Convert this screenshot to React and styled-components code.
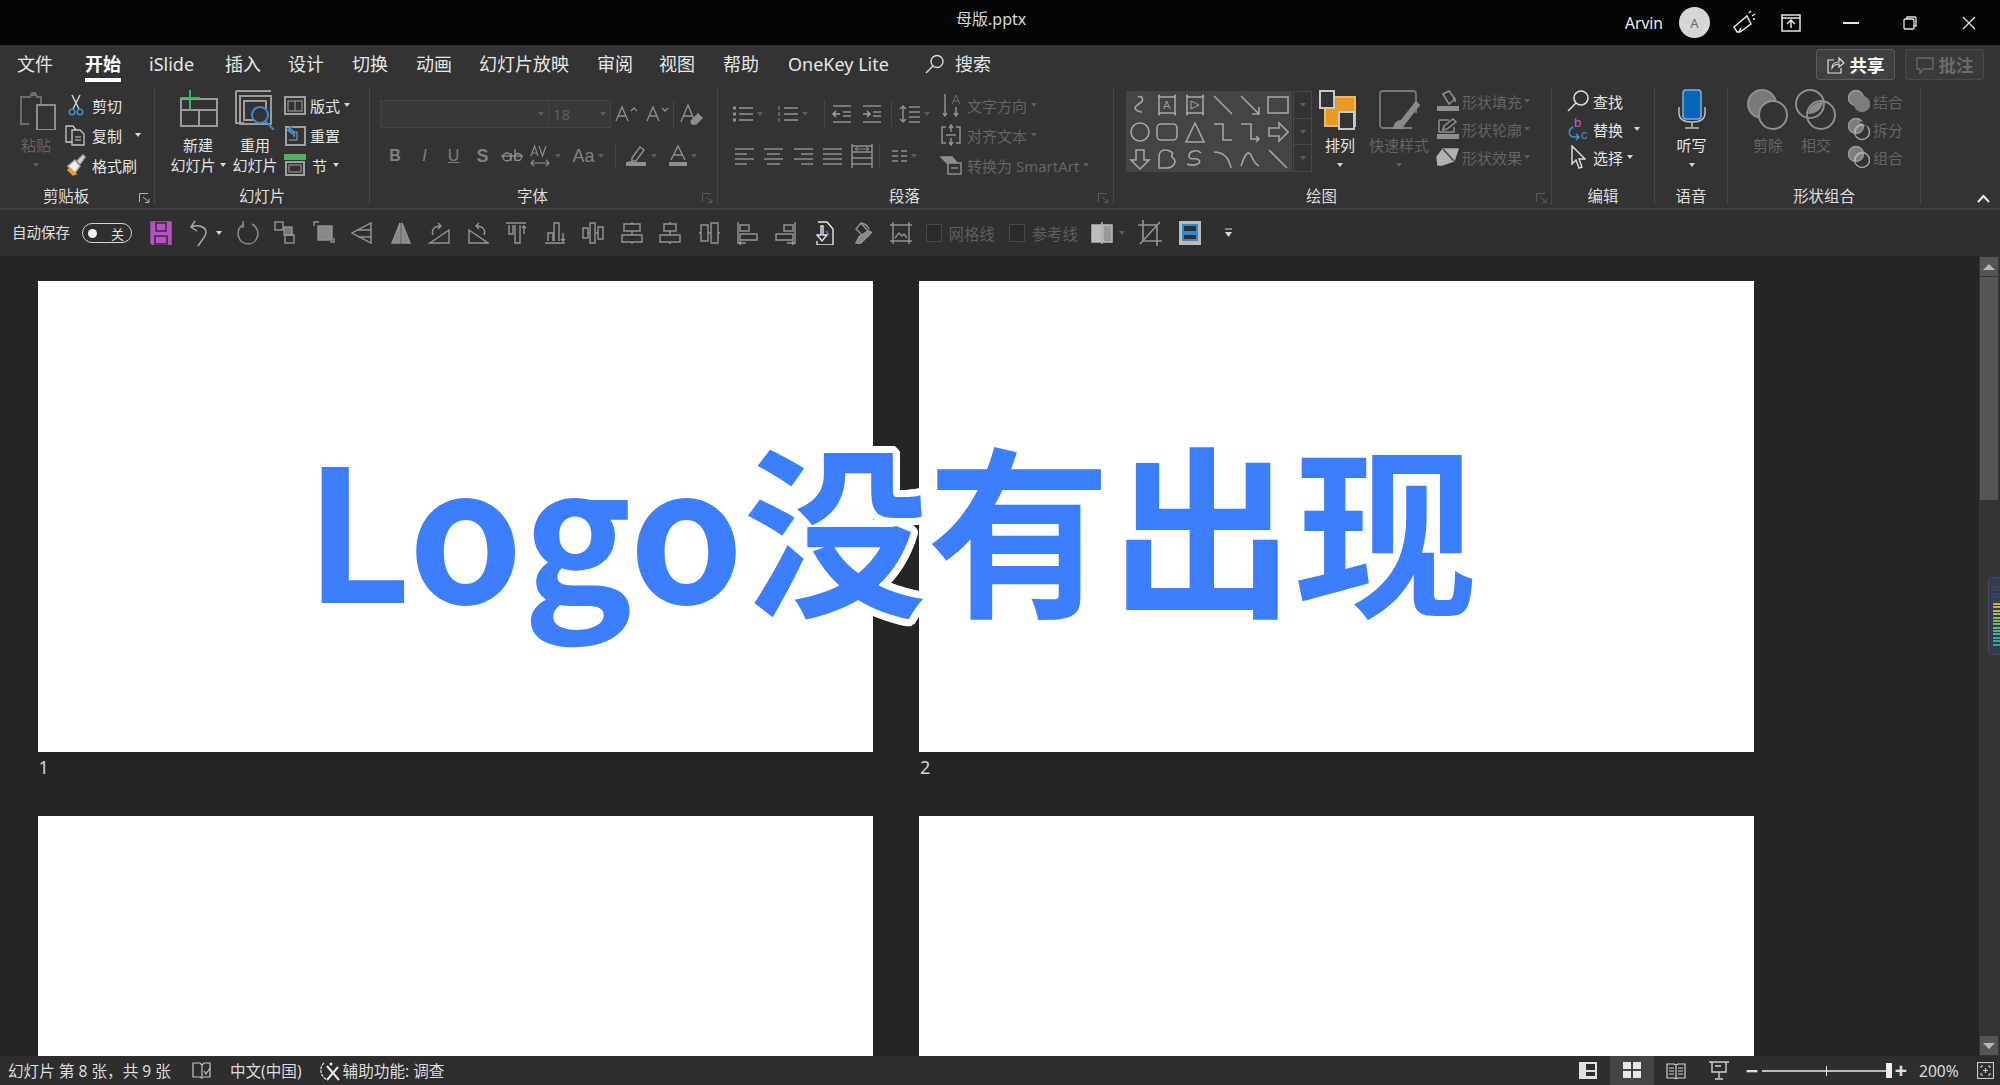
import React from "react";
import styled, { createGlobalStyle } from "styled-components";

const Global = createGlobalStyle`
  html, body { margin: 0; padding: 0; background: #252525; }
  body { font-family: "Noto Sans", "Noto Sans CJK SC", sans-serif; overflow: hidden; }
  * { box-sizing: border-box; }
`;
const CJK = `"Noto Sans", "Noto Sans CJK SC", sans-serif`;
const ring = Array.from({ length: 36 }, (_, i) => {
  const a = (i / 36) * Math.PI * 2;
  return `${(Math.cos(a) * 7).toFixed(1)}px ${(Math.sin(a) * 7).toFixed(1)}px 0 #fff`;
}).join(", ");

const Window = styled.div`position: relative; width: 2000px; height: 1085px; display: flex; flex-direction: column; overflow: hidden; color: #e4e4e4; font-family: ${CJK};`;

/* title bar */
const TitleBar = styled.div`height: 45px; background: #050505; display: flex; align-items: center; position: relative; flex: none;`;
const FileName = styled.div`position: absolute; left: 956px; top: 8px; font-size: 16px; line-height: 22px; color: #d8d8d8;`;
const TitleRight = styled.div`margin-left: 1625px; display: flex; align-items: center;`;
const UserName = styled.span`font-size: 15.6px; color: #ececec; width: 54px;`;
const Avatar = styled.div`width: 31px; height: 31px; border-radius: 50%; background: #d6d6d6; color: #667; font-size: 13px; display: flex; align-items: center; justify-content: center;`;
const WinBtn = styled.div`width: ${p => p.$w}px; display: flex; justify-content: center;`;

/* tabs */
const TabBar = styled.div`height: 43px; background: #333; display: flex; align-items: flex-start; padding-left: 17px; position: relative; flex: none;`;
const Tab = styled.div`width: ${p => p.$w}px; font-size: 18px; line-height: 38px; height: 38px; color: ${p => p.$active ? "#fff" : "#e6e6e6"}; font-weight: ${p => p.$active ? 700 : 400}; position: relative; white-space: nowrap;
  ${p => p.$active && `&::after { content: ""; position: absolute; left: 0; width: 36px; top: 33px; height: 4px; background: #fff; }`}`;
const SearchBox = styled.div`display: flex; align-items: center; gap: 11px; font-size: 18px; line-height: 38px; color: #e6e6e6;`;
const TabActions = styled.div`position: absolute; right: 16px; top: 4px; display: flex; gap: 10px;`;
const TabBtn = styled.div`width: 79px; height: 31px; border-radius: 3px; border: 1px solid ${p => p.$dim ? "#484848" : "#5c5c5c"}; background: ${p => p.$dim ? "#3a3a3a" : "#404040"}; color: ${p => p.$dim ? "#6b6b6b" : "#fff"}; font-weight: 700; font-size: 17.5px; line-height: 26px; display: flex; align-items: center; justify-content: center; gap: 5px;`;

/* ribbon */
const Ribbon = styled.div`height: 122px; background: #333; display: flex; border-bottom: 2px solid #3f3f3f; position: relative; flex: none; padding-bottom: 4px;`;
const Group = styled.section`width: ${p => p.$w}px; display: flex; flex-direction: column; border-right: 1px solid #474747; flex: none; height: 117px;`;
const Body = styled.div`height: 99px; margin-top: -1px; display: flex; padding-left: ${p => p.$pl || 0}px; gap: ${p => p.$gap || 0}px;`;
const GroupLabel = styled.div`height: 19px; line-height: 22px; text-align: center; font-size: 15.4px; color: #dedede; position: relative; padding-right: ${p => p.$shift || 0}px;`;
const Launcher = styled.span`position: absolute; right: 4px; top: 7px;`;
const Big = styled.div`width: ${p => p.$w}px; display: flex; flex-direction: column; align-items: center; flex: none;`;
const BigIcon = styled.div`height: 46px; display: flex; align-items: center; justify-content: center;`;
const BigText = styled.div`font-size: 15px; line-height: 20px; height: 20px; margin-top: ${p => p.$second ? 0 : 2}px; white-space: nowrap; color: ${p => p.$dim ? "#646464" : "#e4e4e4"}; display: flex; align-items: center; gap: 4px;`;
const Col = styled.div`display: flex; flex-direction: column; flex: none; width: ${p => p.$w ? p.$w + "px" : "auto"}; margin-left: ${p => p.$ml || 0}px; padding-top: ${p => p.$pt ?? 3}px;`;
const Row = styled.div`height: ${p => p.$h || 30}px; display: flex; align-items: center; gap: ${p => p.$gap ?? 4}px; font-size: 15px; white-space: nowrap; color: ${p => p.$dim ? "#646464" : "#e6e6e6"};`;
const IconSlot = styled.span`width: ${p => p.$w || 22}px; display: flex; justify-content: center; flex: none;`;
const Caret = styled.i`display: inline-block; width: 0; height: 0; border-left: 3.5px solid transparent; border-right: 3.5px solid transparent; border-top: 4px solid ${p => p.$dim ? "#5c5c5c" : "#d8d8d8"}; margin-left: ${p => p.$ml || 0}px; flex: none;`;
const CaretRow = styled.div`height: 20px; display: flex; align-items: center; justify-content: center;`;

const FontFields = styled.div`width: 231px; height: 28px; margin-left: 10px; border: 1px solid #444; display: flex; background: #383838;`;
const FontName = styled.div`width: 168px; border-right: 1px solid #444; display: flex; align-items: center; justify-content: flex-end; padding-right: 4px;`;
const FontSize = styled.div`flex: 1; font-size: 15px; color: #5e5e5e; display: flex; align-items: center; justify-content: space-between; padding: 0 4px 0 4px;`;
const ToolRow = styled.div`display: flex; align-items: center; height: ${p => p.$h}px; padding-left: ${p => p.$pl || 0}px; color: #8a8a8a;`;
const ToolCell = styled.div`width: ${p => p.$w}px; display: flex; align-items: center; justify-content: ${p => p.$start ? "flex-start" : "center"}; padding-left: ${p => p.$pl || 0}px; gap: 3px; flex: none;`;
const FontGlyph = styled.span`font-size: ${p => p.$s || 16}px; color: #808080; font-weight: ${p => p.$b ? 700 : 400}; font-style: ${p => p.$i ? "italic" : "normal"}; text-decoration: ${p => p.$u ? "underline" : "none"}; font-family: "Liberation Sans", sans-serif;`;
const VSep = styled.div`width: 1px; height: ${p => p.$h || 26}px; background: #474747; flex: none; margin: 0 ${p => p.$m || 0}px;`;

const Gallery = styled.div`width: 186px; height: 81px; margin: 4px 0 0 12px; display: flex; flex: none;`;
const GalleryGrid = styled.div`width: 166px; background: #444; display: grid; grid-template-columns: repeat(6, 1fr); grid-auto-rows: 27px; place-items: center;`;
const GalleryScroll = styled.div`width: 19px; margin-left: 1px; border: 1px solid #484848; display: flex; flex-direction: column;`;
const GalleryBtn = styled.div`flex: 1; display: flex; align-items: center; justify-content: center; border-bottom: ${p => p.$last ? 0 : "1px solid #484848"};`;

/* quick access */
const Quick = styled.div`height: 46px; background: #2f2f2f; display: flex; align-items: center; padding-left: 12px; flex: none;`;
const AutoSave = styled.span`font-size: 14.5px; line-height: 18px; margin-top: -3px; color: #e0e0e0; width: 70px; white-space: nowrap;`;
const Toggle = styled.div`width: 50px; height: 20px; border-radius: 10px; border: 1.5px solid #d4d4d4; display: flex; align-items: center; justify-content: space-between; padding: 0 7px 0 5px; font-size: 13px; color: #e6e6e6; margin-right: 10px;`;
const Knob = styled.i`width: 9px; height: 9px; border-radius: 50%; background: #f0f0f0;`;
const Slot = styled.div`width: ${p => p.$w || 38.5}px; display: flex; justify-content: center; align-items: center; gap: 3px; flex: none;`;
const CheckItem = styled.div`display: flex; align-items: center; gap: 7px; font-size: 15.4px; color: #5e5e5e; margin-left: ${p => p.$ml}px;`;
const CheckBox = styled.i`width: 16px; height: 18px; border: 1px solid #484848; background: #2a2a2a;`;

/* workspace */
const Workspace = styled.div`flex: 1; min-height: 0; background: #252525; display: flex; position: relative;`;
const Slides = styled.div`flex: 1; padding: 25px 0 0 37.5px; display: grid; grid-template-columns: 835px 835px; grid-auto-rows: 535px; column-gap: 46.5px; overflow: hidden;`;
const Cell = styled.div`font-size: 18px; color: #d4d4d4; line-height: 30px;`;
const Sheet = styled.div`height: 471px; background: #fff;`;
const Num = styled.div`padding-left: 1px;`;
const Scrollbar = styled.div`width: 21px; background: #343434; display: flex; flex-direction: column; padding: 1px 2px 1px 1px; flex: none;`;
const ScrollBtn = styled.div`height: 19px; background: #555; display: flex; align-items: center; justify-content: center; flex: none;`;
const Thumb = styled.div`height: 223px; margin-top: 1px; background: #565656; flex: none;`;
const ScrollGap = styled.div`flex: 1;`;
const Arrow = styled.i`width: 0; height: 0; border-left: 6px solid transparent; border-right: 6px solid transparent; ${p => p.$down ? "border-top" : "border-bottom"}: 6px solid #b8b8b8;`;
const Meter = styled.div`position: absolute; right: -4px; top: 321px; width: 16px; height: 78px; border-radius: 4px; background: #33394f; border: 1px solid #434a60; display: flex; flex-direction: column; gap: 1.4px; padding: 8px 3px 6px 4px;`;
const Tick = styled.i`height: 2px; background: ${p => p.$c};`;
const Headline = styled.div`position: absolute; left: 305px; top: 393px; font-family: "Noto Sans CJK SC", sans-serif; font-weight: 700; font-size: 183.4px; line-height: 260px; color: #3d7eff; white-space: nowrap; text-shadow: ${ring};`;

/* status */
const Status = styled.div`height: 29px; background: #2e2e2e; display: flex; align-items: center; font-size: 15.6px; color: #dcdcdc; padding: 0 6px 0 8px; flex: none; white-space: nowrap;`;
const StatusItem = styled.span`margin-left: ${p => p.$ml || 0}px; display: flex; align-items: center; gap: ${p => p.$gap || 0}px;`;
const StatusRight = styled.div`margin-left: auto; display: flex; align-items: center;`;
const ViewBtn = styled.div`width: ${p => p.$w}px; height: 29px; display: flex; align-items: center; justify-content: center; background: ${p => p.$on ? "#444" : "transparent"}; margin-left: ${p => p.$ml || 0}px; flex: none;`;
const Zoom = styled.div`display: flex; align-items: center; margin-left: 5px;`;
const Sign = styled.span`font-size: 21px; line-height: 20px; font-weight: 700; color: #e0e0e0; width: ${p => p.$w}px; margin-left: ${p => p.$ml || 0}px; text-align: center; font-family: "Liberation Sans", sans-serif;`;
const Track = styled.div`width: 130px; margin-left: 3px; height: 2px; background: #bbb; position: relative;`;
const TrackTick = styled.i`position: absolute; left: 64px; top: -4px; width: 1px; height: 10px; background: #ddd;`;
const TrackHandle = styled.i`position: absolute; right: 0; top: -7px; width: 6px; height: 15px; background: #eee;`;
const Percent = styled.span`margin-left: 9px; width: 42px;`;
const Collapse = styled.span`position: absolute; left: 1977px; top: 106px;`;

const Svg = styled.svg`display: block; flex: none; fill: none; stroke: ${p => p.$c || "#979797"}; stroke-width: ${p => p.$sw || 1.5};`;
const Ic = ({ w = 22, h = 22, c, sw, children }) => <Svg width={w} height={h} viewBox={`0 0 ${w} ${h}`} $c={c} $sw={sw}>{children}</Svg>;
const G = "#8e8e8e", D = "#6c6c6c";

const PasteI = () => <Ic w={46} h={40} c={D} sw={2}><g transform="translate(6 0)"><path d="M8 7H2v27h8" /><path d="M8 7h3l2-4 3 0 2 4h4v9" /><path d="M12 5h6" /><rect x="18" y="15" width="18" height="25" fill="#333" stroke={G} /></g></Ic>;
const ScissorI = () => <Ic w={16} h={24}><path d="M4 2l7 14M12 2L5 16" stroke="#cfcfcf" /><circle cx="4" cy="19" r="2.8" stroke="#3d8fd6" /><circle cx="12" cy="19" r="2.8" stroke="#3d8fd6" /></Ic>;
const CopyI = () => <Ic w={22} h={22} c="#c8c8c8" sw={1.3}><path d="M7 18H1V2h7l3 4" /><path d="M7 6h8l4 4v11H7z" /><path d="M10 13h6M10 16h6" stroke="#999" /></Ic>;
const BrushI = () => <Ic w={22} h={22}><path d="M3 12l7-6 5 6-6 8z" fill="#f0f0f0" stroke="#aaa" /><path d="M5 14l6 6-3 1-5-5z" fill="#e4a02a" stroke="#e4a02a" /><path d="M12 7l6-6 2 2-5 7" fill="#d8d8d8" stroke="#aaa" /></Ic>;
const NewSlideI = () => <Ic w={42} h={40} c="#9c9c9c" sw={2}><rect x="4" y="9" width="36" height="27" /><path d="M4 20h36M22 20v16" /><path d="M3 8h20" stroke="#43b35c" /><path d="M13 0v20" stroke="#43b35c" /></Ic>;
const ReuseI = () => <Ic w={40} h={40} c="#9c9c9c" sw={2}><path d="M1 1h35M1 1v32h8" /><rect x="5" y="6" width="31" height="28" /><rect x="9" y="11" width="22" height="19" /><circle cx="25" cy="25" r="8" stroke="#3b8ad2" fill="#333" /><path d="M30 31l9 9" stroke="#3b8ad2" /></Ic>;
const LayoutI = () => <Ic w={22} h={19} c="#a0a0a0" sw={2}><rect x="1" y="1" width="20" height="17" /><rect x="4" y="5" width="14" height="10" strokeWidth="1" /><path d="M11 5v10" strokeWidth="1" /></Ic>;
const ResetI = () => <Ic w={22} h={22} c="#a0a0a0" sw={2}><rect x="2" y="3" width="19" height="18" /><path d="M5 8h8v8H5" strokeWidth="1" /><path d="M9 2L4 6l5 4" stroke="#3d8fd6" /><path d="M5 6c5 0 6 3 5 7" stroke="#3d8fd6" /></Ic>;
const SectionI = () => <Ic w={22} h={22} c="#a0a0a0" sw={2}><rect x="1" y="1" width="20" height="4" fill="#4fb25f" stroke="#4fb25f" /><rect x="2" y="8" width="18" height="13" /><rect x="5" y="11" width="12" height="7" strokeWidth="1" /></Ic>;
const LaunchI = ({ c = "#b0b0b0" }) => <Ic w={11} h={10} c={c} sw={1}><path d="M.5 9V.5H9" /><path d="M4 4l6 5M6 9.5h4V6" /></Ic>;
const GrowA = ({ down }) => <Ic w={24} h={20} c={G} sw={1.3}><path d="M1 17L7 3l6 14M3.5 12h7" /><path d={down ? "M16 4l3 3 3-3" : "M16 7l3-3 3 3"} /></Ic>;
const ClearA = () => <Ic w={24} h={24} c={G} sw={1.4}><path d="M2 20L9 3l7 17M5 14h8" /><path d="M12 19l7-7 4 4-6 6h-4z" fill={G} /></Ic>;
const AVI = () => <Ic w={22} h={24} c={G} sw={1.2}><path d="M1 12L4.5 2 8 12M2.2 9h4.6M9 2l3.5 10L16 2" /><path d="M1 19h18M4 16l-3 3 3 3M16 16l3 3-3 3" /></Ic>;
const PenI = () => <Ic w={24} h={22} c={G}><path d="M8 13L16 2l4 3-8 11H8zM4 17h4" /><rect x="2" y="17" width="20" height="4" fill={G} stroke="none" /></Ic>;
const ColorA = () => <Ic w={20} h={24} c={G} sw={1.4}><path d="M3 16L10 2l7 14M5.5 11h9" /><rect x="1" y="18" width="18" height="4" fill={G} stroke="none" /></Ic>;
const StrikeI = () => <Ic w={24} h={22} c={G} sw={1.3}><path d="M1 11h22" /><circle cx="7" cy="12" r="4" /><path d="M11 8v8M15 4v12" /><circle cx="18" cy="12" r="3.5" /></Ic>;
const ListI = ({ n }) => <Ic w={22} h={20} c={G} sw={1.6}>{[4, 10, 16].map(y => <React.Fragment key={y}><path d={`M7 ${y}h14`} />{n ? <path d={`M2 ${y - 2}v4`} strokeWidth="1" /> : <rect x="1" y={y - 1.5} width="3" height="3" fill={G} stroke="none" />}</React.Fragment>)}</Ic>;
const IndentI = ({ dir }) => <Ic w={20} h={20} c={G} sw={1.5}><path d="M1 2h18M1 18h18M11 8h8M11 12h8" /><path d={dir ? "M1 10h7M5 7l3 3-3 3" : "M8 10H1M4 7l-3 3 3 3"} stroke="#a0a0a0" /></Ic>;
const SpacingI = () => <Ic w={22} h={22} c={G} sw={1.5}><path d="M4 3v16M1 6l3-3 3 3M1 16l3 3 3-3" /><path d="M10 4h11M10 9h11M10 14h11M10 19h11" /></Ic>;
const AlignI = ({ k }) => {
  const r = { l: [[1, 20], [1, 13], [1, 20], [1, 13]], c: [[1, 20], [4, 17], [1, 20], [4, 17]], r: [[1, 20], [8, 20], [1, 20], [8, 20]], j: [[1, 20], [1, 20], [1, 20], [1, 20]] }[k];
  return <Ic w={21} h={20} c={G} sw={1.5}>{r.map((s, i) => <path key={i} d={`M${s[0]} ${3 + i * 5}H${s[1]}`} />)}</Ic>;
};
const DistI = () => <Ic w={22} h={26} c={G} sw={1.5}><path d="M1 1v24M21 1v24" /><path d="M1 3h20M1 9h20M1 15h20M1 21h20" /><path d="M4 6h14M15 4l3 2-3 2M7 4L4 6l3 2" strokeWidth="1" /></Ic>;
const ColsI = () => <Ic w={17} h={14} c={G} sw={1.5}><path d="M1 2h6M1 7h6M1 12h6M10 2h6M10 7h6M10 12h6" /></Ic>;
const DirI = () => <Ic w={18} h={24} c={D} sw={1.5}><path d="M3 1v22M1 20l2 3 2-3M14 14v9M12 20l2 3 2-3" stroke={G} /><path d="M10 11l4-9 4 9M11 8h6" strokeWidth="1" /></Ic>;
const VAlignI = () => <Ic w={22} h={22} c={D} sw={1.5}><path d="M6 3H2v16h4M16 3h4v16h-4" stroke={G} /><path d="M11 1v7M9 4l2-3 2 3M11 21v-7M9 18l2 3 2-3M6 11h10" stroke={G} /></Ic>;
const SmartI = () => <Ic w={22} h={20} c={D}><path d="M1 2h11l6 7H8z" fill={G} stroke={G} /><rect x="8" y="8" width="13" height="11" fill="#333" stroke={G} /><path d="M11 13h7" stroke={G} /></Ic>;
const FillI = () => <Ic w={24} h={22} c={G}><path d="M7 4l6-3 6 8-6 5z" /><path d="M17 8c2 1 3 2 2 4" /><rect x="1" y="16" width="22" height="5" fill={G} stroke="none" /></Ic>;
const OutlineI = () => <Ic w={24} h={22} c={G}><path d="M3 2h10M3 2v12h15V9" /><path d="M7 12l1-4 9-7 3 3-9 7z" /><rect x="1" y="16" width="22" height="5" fill={G} stroke="none" /></Ic>;
const EffectI = () => <Ic w={24} h={20} c="#a8a8a8" sw={1.5}><path d="M1 10L7 2h15L18 14 6 18H2z" fill="#b0b0b0" stroke="#b0b0b0" /><path d="M7 2l11 12" stroke="#444" /></Ic>;
const ArrangeI = () => <Ic w={42} h={40} sw={2}><rect x="6" y="7" width="30" height="29" fill="#e89a22" stroke="#f0b860" /><rect x="1" y="1" width="14" height="17" fill="#333" stroke="#c8c8c8" /><rect x="20" y="22" width="15" height="17" fill="#333" stroke="#c8c8c8" /></Ic>;
const QuickI = () => <Ic w={42} h={40} c="#787878" sw={1.8}><path d="M34 38H5a3 3 0 0 1-3-3V4a3 3 0 0 1 3-3h30a3 3 0 0 1 3 3v19" /><path d="M24 30l14-18 3 3-14 18z" fill="#8a8a8a" stroke="#8a8a8a" /><path d="M16 38c1-6 6-9 11-6l-3 6z" fill="#8a8a8a" stroke="#8a8a8a" /></Ic>;
const FindI = () => <Ic w={22} h={22} c="#e0e0e0"><circle cx="14" cy="8" r="7" /><path d="M9 13l-8 8" /></Ic>;
const ReplaceI = () => <Ic w={22} h={24}><text x="7" y="10" fontSize="13" fill="#c65fd0" stroke="none" fontFamily="Liberation Sans">b</text><text x="14" y="22" fontSize="13" fill="#3d8fd6" stroke="none" fontFamily="Liberation Sans">c</text><path d="M6 10C1 13 1 18 6 20l6 0M9 17l3 3-3 3" stroke="#3d8fd6" /></Ic>;
const CursorI = () => <Ic w={16} h={24} c="#d8d8d8"><path d="M2 1v18l4-4 3 8 3-1-3-8h6z" /></Ic>;
const MicI = () => <Ic w={28} h={42} sw={1.5}><rect x="5" y="1" width="18" height="29" rx="3" fill="#0a64b8" stroke="#7aaedc" /><path d="M1 18v6c0 7 6 9 13 9s13-2 13-9v-6M14 33v5M7 39h14" stroke="#c0c0c0" /></Ic>;
const ScI = ({ k }) => ({
  a: <Ic w={42} h={42} c={D} sw={2}><circle cx="15" cy="15" r="14" fill="#7a7a7a" stroke={G} /><circle cx="26" cy="26" r="14" fill="#333" stroke={G} /></Ic>,
  b: <Ic w={42} h={42} c={G} sw={2}><circle cx="15" cy="15" r="14" /><circle cx="26" cy="26" r="14" /><path d="M13 25a14 14 0 0 1 15-12 14 14 0 0 1-15 12z" fill="#8a8a8a" stroke="none" /></Ic>,
}[k]);
const Blob = ({ k }) => <Ic w={22} h={24} c={G} sw={1.4}>
  <circle cx="8" cy="9" r="7.5" fill="#7d7d7d" stroke="#9a9a9a" />
  <circle cx="14" cy="15" r="7.5" fill={k === 0 ? "#7d7d7d" : "none"} stroke={k === 0 ? "#7d7d7d" : "#a4a4a4"} />
  {k > 0 && <path d="M7 16a7.5 7.5 0 0 1 8-8" stroke="#b0b0b0" />}
  {k === 1 && <path d="M12 5a8 8 0 0 1 7 7" stroke="#333" />}
</Ic>;

const shapeD = [
  <path d="M9 3c5-2 6 4 2 6l-4 3c-3 3 2 6 6 6" />,
  <><rect x="3" y="3" width="16" height="16" /><text x="7" y="15" fontSize="11" fill="#999" stroke="none" fontFamily="Liberation Sans">A</text><path d="M2 2h2M18 2h2M2 20h2M18 20h2" strokeWidth="2.4" /></>,
  <><rect x="3" y="3" width="16" height="16" /><path d="M7 7l8 4-8 4z" strokeWidth="1" /><path d="M2 2h2M18 2h2M2 20h2M18 20h2" strokeWidth="2.4" /></>,
  <path d="M2 2l18 18" />, <path d="M2 2l17 17M13 20h7v-7" />, <rect x="1" y="3" width="20" height="16" />,
  <circle cx="11" cy="11" r="9" />, <rect x="1" y="3" width="20" height="16" rx="4" />, <path d="M11 2l9 19H2z" />,
  <path d="M2 3h9v16h9" />, <path d="M2 3h10v15h8M17 15l3 3-3 3" />, <path d="M2 7h10V2l9 9-9 9v-5H2z" />,
  <path d="M7 2h8v10h5L11 21 2 12h5z" />, <path d="M9 2c5 0 9 3 7 5-2 3 4 3 3 7s-4 6-9 6H3V9c0-4 2-7 6-7z" />, <path d="M3 16c8 3 15-1 12-4s-10 1-10-4 8-7 12-3" />,
  <path d="M2 4c9 0 15 6 17 16" />, <path d="M2 18C6 6 9 2 12 7c2 5 4 9 8 11" />, <path d="M2 2l18 18" />,
];

const Q = {
  squares: <><rect x="1" y="1" width="8" height="8" /><rect x="10" y="6" width="8" height="8" fill="#777" /><rect x="11" y="14" width="9" height="8" /></>,
  stack: <><path d="M1 5V1h5M21 17v4h-4" /><rect x="5" y="5" width="14" height="14" fill="#888" /></>,
  flipH: <path d="M20 2v20L1 12zM20 9H7M20 16H7" />,
  flipV: <><path d="M10 2v20H2z" fill="#888" /><path d="M12 2v20h8z" fill="#888" /></>,
  rotR: <><path d="M2 22h19V9z" /><path d="M5 14c-2-5 1-9 8-9M10 2l3 3-3 3" /></>,
  rotL: <><path d="M21 22H2V9z" /><path d="M17 14c2-5-1-9-8-9M12 2L9 5l3 3" /></>,
  top: <><path d="M1 2h20M4 4v9h4V4M10 4v18h5V4" /><path d="M19 13V5M17 7l2-2 2 2" /></>,
  bottom: <><path d="M1 22h20M4 20v-8h5v8M10 20V2h5v18" /><path d="M19 12v8M17 18l2 2 2-2" /></>,
  dist: <path d="M1 7h5v10H1zM8 2h5v20H8zM13 12h3M16 6h5v12h-5zM6 12h2" />,
  hc: <path d="M11 1v2M11 10v4M11 21v2M3 3h16v7H3zM1 14h20v7H1z" />,
  hc2: <path d="M11 1v2M11 10v4M11 21v2M5 3h12v7H5zM1 14h20v7H1z" />,
  vc: <path d="M1 12h2M10 12h3M20 12h2M3 4h7v16H3zM13 2h7v20h-7z" />,
  left: <><path d="M2 1v22M4 4h9v6H4zM4 13h17v6H4z" /><path d="M10 22H3M5 20l-2 2 2 2" /></>,
  right: <><path d="M20 1v22M9 4h9v6H9zM1 13h17v6H1z" /><path d="M12 22h7M17 20l2 2-2 2" /></>,
  file: <><path d="M5 1h9l6 7v16H4V20" stroke="#e6e6e6" /><path d="M8 5v9H4l5 6 5-6h-4V5z" stroke="#e6e6e6" /><path d="M13 10l3 4" stroke="#2c7fd0" strokeWidth="2" /></>,
  brush: <><path d="M4 8l5-6 7 8-5 5zM9 2c3 0 7 3 8 6" /><path d="M20 11L9 22c-2 1-4 0-5 0l3-6 10-7" fill="#888" /></>,
  frame: <><path d="M3 1v22M19 1v22M0 4h22M0 20h22" /><path d="M5 17l4-5 3 3 2-2 3 4" /></>,
};
const Qi = ({ k }) => <Ic w={22} h={24} c="#949494" sw={1.4}>{Q[k]}</Ic>;

const tabs = [["文件", 68], ["开始", 64, true], ["iSlide", 76], ["插入", 63], ["设计", 64], ["切换", 64], ["动画", 63], ["幻灯片放映", 118], ["审阅", 62], ["视图", 64], ["帮助", 65], ["OneKey Lite", 137]];
const qaIcons = ["squares", "stack", "flipH", "flipV", "rotR", "rotL", "top", "bottom", "dist", "hc", "hc2", "vc", "left", "right", "file", "brush", "frame"];
const meterColors = ["#394060", "#394060", "#394060", "#394060", "#394060", "#d8a838", "#d0b040", "#b8b848", "#a8b84c", "#98b850", "#88b858", "#78b860", "#68b868", "#58b078", "#48b088", "#40a890", "#38a898", "#38a898"];

function GroupClipboard() {
  return <Group $w={155}>
    <Body $pl={16}>
      <Big $w={40}><BigIcon><PasteI /></BigIcon><BigText $dim>粘贴</BigText><CaretRow><Caret $dim /></CaretRow></Big>
      <Col $ml={9}>
        <Row $gap={5}><IconSlot $w={22}><ScissorI /></IconSlot>剪切</Row>
        <Row $gap={5}><IconSlot $w={22}><CopyI /></IconSlot>复制<Caret $ml={8} /></Row>
        <Row $gap={5}><IconSlot $w={22}><BrushI /></IconSlot>格式刷</Row>
      </Col>
    </Body>
    <GroupLabel $shift={22}>剪贴板<Launcher><LaunchI /></Launcher></GroupLabel>
  </Group>;
}
function GroupSlides() {
  return <Group $w={215}>
    <Body $pl={12}>
      <Big $w={62}><BigIcon><NewSlideI /></BigIcon><BigText>新建</BigText><BigText $second>幻灯片<Caret /></BigText></Big>
      <Big $w={52}><BigIcon><ReuseI /></BigIcon><BigText>重用</BigText><BigText $second>幻灯片</BigText></Big>
      <Col $ml={3}>
        <Row><IconSlot><LayoutI /></IconSlot>版式<Caret /></Row>
        <Row><IconSlot><ResetI /></IconSlot>重置</Row>
        <Row $gap={6}><IconSlot><SectionI /></IconSlot>节<Caret /></Row>
      </Col>
    </Body>
    <GroupLabel>幻灯片</GroupLabel>
  </Group>;
}
function GroupFont() {
  return <Group $w={348}>
    <Body>
      <Col $pt={0}>
        <ToolRow $h={54}>
          <FontFields><FontName><Caret $dim /></FontName><FontSize>18<Caret $dim /></FontSize></FontFields>
          <ToolCell $w={32}><GrowA /></ToolCell>
          <ToolCell $w={30}><GrowA down /></ToolCell>
          <VSep $h={26} />
          <ToolCell $w={34}><ClearA /></ToolCell>
        </ToolRow>
        <ToolRow $h={30} $pl={10}>
          <ToolCell $w={30}><FontGlyph $b>B</FontGlyph></ToolCell>
          <ToolCell $w={29}><FontGlyph $i>I</FontGlyph></ToolCell>
          <ToolCell $w={29}><FontGlyph $u>U</FontGlyph></ToolCell>
          <ToolCell $w={29}><FontGlyph $b $s={18}>S</FontGlyph></ToolCell>
          <ToolCell $w={29}><StrikeI /></ToolCell>
          <ToolCell $w={38}><AVI /><Caret $dim /></ToolCell>
          <ToolCell $w={48}><FontGlyph $s={18}>Aa</FontGlyph><Caret $dim /></ToolCell>
          <VSep $h={26} $m={3} />
          <ToolCell $w={42}><PenI /><Caret $dim /></ToolCell>
          <ToolCell $w={42}><ColorA /><Caret $dim /></ToolCell>
        </ToolRow>
      </Col>
    </Body>
    <GroupLabel $shift={22}>字体<Launcher><LaunchI c="#5a5a5a" /></Launcher></GroupLabel>
  </Group>;
}
function GroupParagraph() {
  return <Group $w={396}>
    <Body>
      <Col $pt={0} $w={221}>
        <ToolRow $h={54} $pl={14}>
          <ToolCell $w={45} $start><ListI /><Caret $dim /></ToolCell>
          <ToolCell $w={45} $start><ListI n /><Caret $dim /></ToolCell>
          <VSep $h={26} $m={2} />
          <ToolCell $w={30}><IndentI /></ToolCell><ToolCell $w={30}><IndentI dir /></ToolCell>
          <VSep $h={26} $m={4} />
          <ToolCell $w={36} $start $pl={3}><SpacingI /><Caret $dim /></ToolCell>
        </ToolRow>
        <ToolRow $h={30} $pl={12}>
          <ToolCell $w={29.3}><AlignI k="l" /></ToolCell><ToolCell $w={29.3}><AlignI k="c" /></ToolCell><ToolCell $w={29.3}><AlignI k="r" /></ToolCell><ToolCell $w={29.3}><AlignI k="j" /></ToolCell><ToolCell $w={29.3}><DistI /></ToolCell>
          <VSep $h={26} $m={3} />
          <ToolCell $w={42}><ColsI /><Caret $dim /></ToolCell>
        </ToolRow>
      </Col>
      <Col>
        <Row $dim><IconSlot $w={24}><DirI /></IconSlot>文字方向<Caret $dim /></Row>
        <Row $dim><IconSlot $w={24}><VAlignI /></IconSlot>对齐文本<Caret $dim /></Row>
        <Row $dim><IconSlot $w={24}><SmartI /></IconSlot>转换为 SmartArt<Caret $dim /></Row>
      </Col>
    </Body>
    <GroupLabel $shift={22}>段落<Launcher><LaunchI c="#5a5a5a" /></Launcher></GroupLabel>
  </Group>;
}
function GroupDrawing() {
  return <Group $w={438}>
    <Body>
      <Gallery>
        <GalleryGrid>{shapeD.map((s, i) => <Ic key={i} c="#a4a4a4" sw={1.6}>{s}</Ic>)}</GalleryGrid>
        <GalleryScroll><GalleryBtn><Caret $dim /></GalleryBtn><GalleryBtn><Caret $dim /></GalleryBtn><GalleryBtn $last><Caret $dim /></GalleryBtn></GalleryScroll>
      </Gallery>
      <Big $w={56}><BigIcon><ArrangeI /></BigIcon><BigText>排列</BigText><CaretRow><Caret /></CaretRow></Big>
      <Big $w={62}><BigIcon><QuickI /></BigIcon><BigText $dim>快速样式</BigText><CaretRow><Caret $dim /></CaretRow></Big>
      <Col $pt={0} $ml={6}>
        <Row $h={28} $dim $gap={2}><IconSlot $w={24}><FillI /></IconSlot>形状填充<Caret $dim /></Row>
        <Row $h={28} $dim $gap={2}><IconSlot $w={24}><OutlineI /></IconSlot>形状轮廓<Caret $dim /></Row>
        <Row $h={28} $dim $gap={2}><IconSlot $w={24}><EffectI /></IconSlot>形状效果<Caret $dim /></Row>
      </Col>
    </Body>
    <GroupLabel $shift={22}>绘图<Launcher><LaunchI c="#5a5a5a" /></Launcher></GroupLabel>
  </Group>;
}
function GroupEdit() {
  return <Group $w={103}>
    <Body><Col $pt={0} $ml={15}>
      <Row $h={28}><IconSlot><FindI /></IconSlot>查找</Row>
      <Row $h={28}><IconSlot><ReplaceI /></IconSlot>替换<Caret $ml={7} /></Row>
      <Row $h={28}><IconSlot><CursorI /></IconSlot>选择<Caret /></Row>
    </Col></Body>
    <GroupLabel>编辑</GroupLabel>
  </Group>;
}
function GroupVoice() {
  return <Group $w={73}>
    <Body><Big $w={73}><BigIcon><MicI /></BigIcon><BigText>听写</BigText><CaretRow><Caret /></CaretRow></Big></Body>
    <GroupLabel>语音</GroupLabel>
  </Group>;
}
function GroupShapes() {
  return <Group $w={193}>
    <Body $pl={18}>
      <Big $w={44}><BigIcon><ScI k="a" /></BigIcon><BigText $dim>剪除</BigText></Big>
      <Big $w={52}><BigIcon><ScI k="b" /></BigIcon><BigText $dim>相交</BigText></Big>
      <Col $pt={0} $ml={6}>
        <Row $h={28} $dim $gap={3}><IconSlot><Blob k={0} /></IconSlot>结合</Row>
        <Row $h={28} $dim $gap={3}><IconSlot><Blob k={1} /></IconSlot>拆分</Row>
        <Row $h={28} $dim $gap={3}><IconSlot><Blob k={2} /></IconSlot>组合</Row>
      </Col>
    </Body>
    <GroupLabel>形状组合</GroupLabel>
  </Group>;
}

export default function App() {
  return (
    <>
      <Global />
      <Window>
        <TitleBar>
          <FileName>母版.pptx</FileName>
          <TitleRight>
            <UserName>Arvin</UserName>
            <Avatar>A</Avatar>
            <WinBtn $w={68}><Ic w={24} h={26} c="#e6e6e6" sw={1.5}><path d="M2 17L15 6l4 8-11 8H5zM7 22l2-4M17 3l2-2M20 6l3-2M21 9h2" /></Ic></WinBtn>
            <WinBtn $w={26}><Ic w={20} h={18} c="#e6e6e6" sw={1.5}><rect x="1" y="1" width="18" height="16" /><path d="M1 4h18M10 14V7M6 10l4-4 4 4" /></Ic></WinBtn>
            <WinBtn $w={94}><Ic w={16} h={2} c="#e6e6e6" sw={2}><path d="M0 1h16" /></Ic></WinBtn>
            <WinBtn $w={24}><Ic w={14} h={14} c="#e6e6e6" sw={1.3}><rect x="1" y="3" width="10" height="10" rx="1" /><path d="M4 3V1h8a1 1 0 0 1 1 1v8h-2" /></Ic></WinBtn>
            <WinBtn $w={94}><Ic w={14} h={14} c="#e6e6e6" sw={1.3}><path d="M1 1l12 12M13 1L1 13" /></Ic></WinBtn>
          </TitleRight>
        </TitleBar>
        <TabBar>
          {tabs.map(([t, w, a]) => <Tab key={t} $w={w} $active={a}>{t}</Tab>)}
          <SearchBox><Ic w={19} h={20} c="#d8d8d8" sw={1.4}><circle cx="12" cy="7.5" r="6" /><path d="M8 12l-7 7" /></Ic>搜索</SearchBox>
          <TabActions>
            <TabBtn><Ic w={18} h={18} c="#e0e0e0" sw={1.2}><path d="M7 4H1v13h13v-5M5 12c0-4 3-6 7-6V2l5 5-5 4V8c-3 0-5 1-7 4z" /></Ic>共享</TabBtn>
            <TabBtn $dim><Ic w={18} h={18} c="#6b6b6b" sw={1.3}><path d="M1 2h16v11H8l-4 4v-4H1z" /></Ic>批注</TabBtn>
          </TabActions>
        </TabBar>
        <Ribbon>
          <GroupClipboard /><GroupSlides /><GroupFont /><GroupParagraph /><GroupDrawing /><GroupEdit /><GroupVoice /><GroupShapes />
          <Collapse><Ic w={13} h={9} c="#f0f0f0" sw={2}><path d="M1 8l5.5-6L12 8" /></Ic></Collapse>
        </Ribbon>
        <Quick>
          <AutoSave>自动保存</AutoSave>
          <Toggle><Knob />关</Toggle>
          <Slot $w={38}><Ic w={22} h={24} c="#2f2f2f" sw={1.5}><path d="M1 1h20v23H3l-2-2z" fill="#b84fc2" stroke="#b84fc2" /><rect x="6" y="2" width="10" height="8" /><rect x="5" y="15" width="12" height="8" /></Ic></Slot>
          <Slot $w={50}><Ic w={24} h={28} c="#a8a8a8" sw={1.5}><path d="M6 2L2 8l6 4M2 8c8-3 18 0 14 9l-7 10" /></Ic><Caret /></Slot>
          <Slot $w={36}><Ic w={24} h={26} c="#8a8a8a" sw={1.5}><path d="M8 4c-10 6-6 20 4 20s14-14 4-20M7 1v7" /></Ic></Slot>
          {qaIcons.map(k => <Slot key={k}><Qi k={k} /></Slot>)}
          <CheckItem $ml={5}><CheckBox />网格线</CheckItem>
          <CheckItem $ml={14}><CheckBox />参考线</CheckItem>
          <Slot $w={48}><Ic w={22} h={24} c="#bdbdbd"><rect x="1" y="4" width="9" height="17" fill="#bdbdbd" /><rect x="12" y="4" width="9" height="17" fill="#999" /><path d="M11 1v22" /></Ic></Slot>
          <Caret $dim $ml={-7} />
          <Slot $w={50}><Ic w={24} h={26} c="#949494" sw={1.6}><path d="M5 0v21h19M0 5h19v21M2 24L22 2" /></Ic></Slot>
          <Slot $w={30}><Ic w={22} h={24} c="#2f8ad0" sw={2}><rect x="1" y="1" width="20" height="22" fill="#bbb" stroke="#bbb" /><rect x="4" y="4" width="14" height="7" fill="#2f2f2f" /><rect x="4" y="13" width="14" height="6" fill="#2f2f2f" /></Ic></Slot>
          <Slot $w={48}><Ic w={9} h={10} c="#d8d8d8" sw={1}><path d="M1 1h7" /><path d="M1 4h7L4.5 9z" fill="#d8d8d8" stroke="none" /></Ic></Slot>
        </Quick>
        <Workspace>
          <Slides>
            <Cell><Sheet /><Num>1</Num></Cell>
            <Cell><Sheet /><Num>2</Num></Cell>
            <Cell><Sheet /></Cell>
            <Cell><Sheet /></Cell>
          </Slides>
          <Scrollbar>
            <ScrollBtn><Arrow /></ScrollBtn>
            <Thumb />
            <ScrollGap />
            <ScrollBtn><Arrow $down /></ScrollBtn>
          </Scrollbar>
          <Meter>{meterColors.map((c, i) => <Tick key={i} $c={c} />)}</Meter>
        </Workspace>
        <Status>
          <span>幻灯片 第 8 张，共 9 张</span>
          <StatusItem $ml={21}><Ic w={19} h={18} c="#c8c8c8" sw={1.2}><path d="M1 1h7l2 2v13l-2-1H1zM10 3l2-2h6v14h-7" /><path d="M12 9l2 3 4-6" /></Ic></StatusItem>
          <StatusItem $ml={19}>中文(中国)</StatusItem>
          <StatusItem $ml={17} $gap={2}><Ic w={22} h={20} c="#d0d0d0" sw={1.4}><path d="M5 2C0 6 1 15 7 18" strokeDasharray="3 1" /><path d="M8 5l12 14M19 6L8 19" stroke="#e8e8e8" strokeWidth="2" /><circle cx="12" cy="3" r="1.5" fill="#e8e8e8" stroke="none" /></Ic>辅助功能: 调查</StatusItem>
          <StatusRight>
            <ViewBtn $w={40}><Ic w={18} h={17} c="#e0e0e0" sw={1}><rect x="0" y="0" width="18" height="17" fill="#e0e0e0" /><rect x="7" y="2" width="9" height="6" fill="#2e2e2e" stroke="none" /><rect x="7" y="10" width="9" height="4" fill="#2e2e2e" stroke="none" /></Ic></ViewBtn>
            <ViewBtn $w={44} $on $ml={2}><Ic w={18} h={17} c="#e6e6e6"><path d="M0 0h8v7H0zM10 0h8v7h-8zM0 9h8v7H0zM10 9h8v7h-8z" fill="#e6e6e6" stroke="none" /></Ic></ViewBtn>
            <ViewBtn $w={44}><Ic w={20} h={17} c="#d0d0d0" sw={1.2}><path d="M1 2h7l2 1 2-1h7v14h-7l-2 1-2-1H1zM10 3v14M3 6h5M3 9h5M3 12h5M12 6h5M12 9h5M12 12h5" /></Ic></ViewBtn>
            <ViewBtn $w={42}><Ic w={20} h={19} c="#d0d0d0" sw={1.4}><path d="M0 1h20M3 1v10h14V1M10 11v6M6 18h8M6 5h6" /></Ic></ViewBtn>
            <Zoom>
              <Sign $w={14}>−</Sign>
              <Track><TrackTick /><TrackHandle /></Track>
              <Sign $w={18}>+</Sign>
            </Zoom>
            <Percent>200%</Percent>
            <ViewBtn $w={17} $ml={16}><Ic w={17} h={17} c="#c8c8c8" sw={1.2}><rect x=".5" y=".5" width="16" height="16" /><path d="M4 4l2 0M4 4v2M13 4h-2M13 4v2M4 13h2M4 13v-2M13 13h-2M13 13v-2M8.5 6v5M6 8.5h5" /></Ic></ViewBtn>
          </StatusRight>
        </Status>
        <Headline>Logo没有出现</Headline>
      </Window>
    </>
  );
}
